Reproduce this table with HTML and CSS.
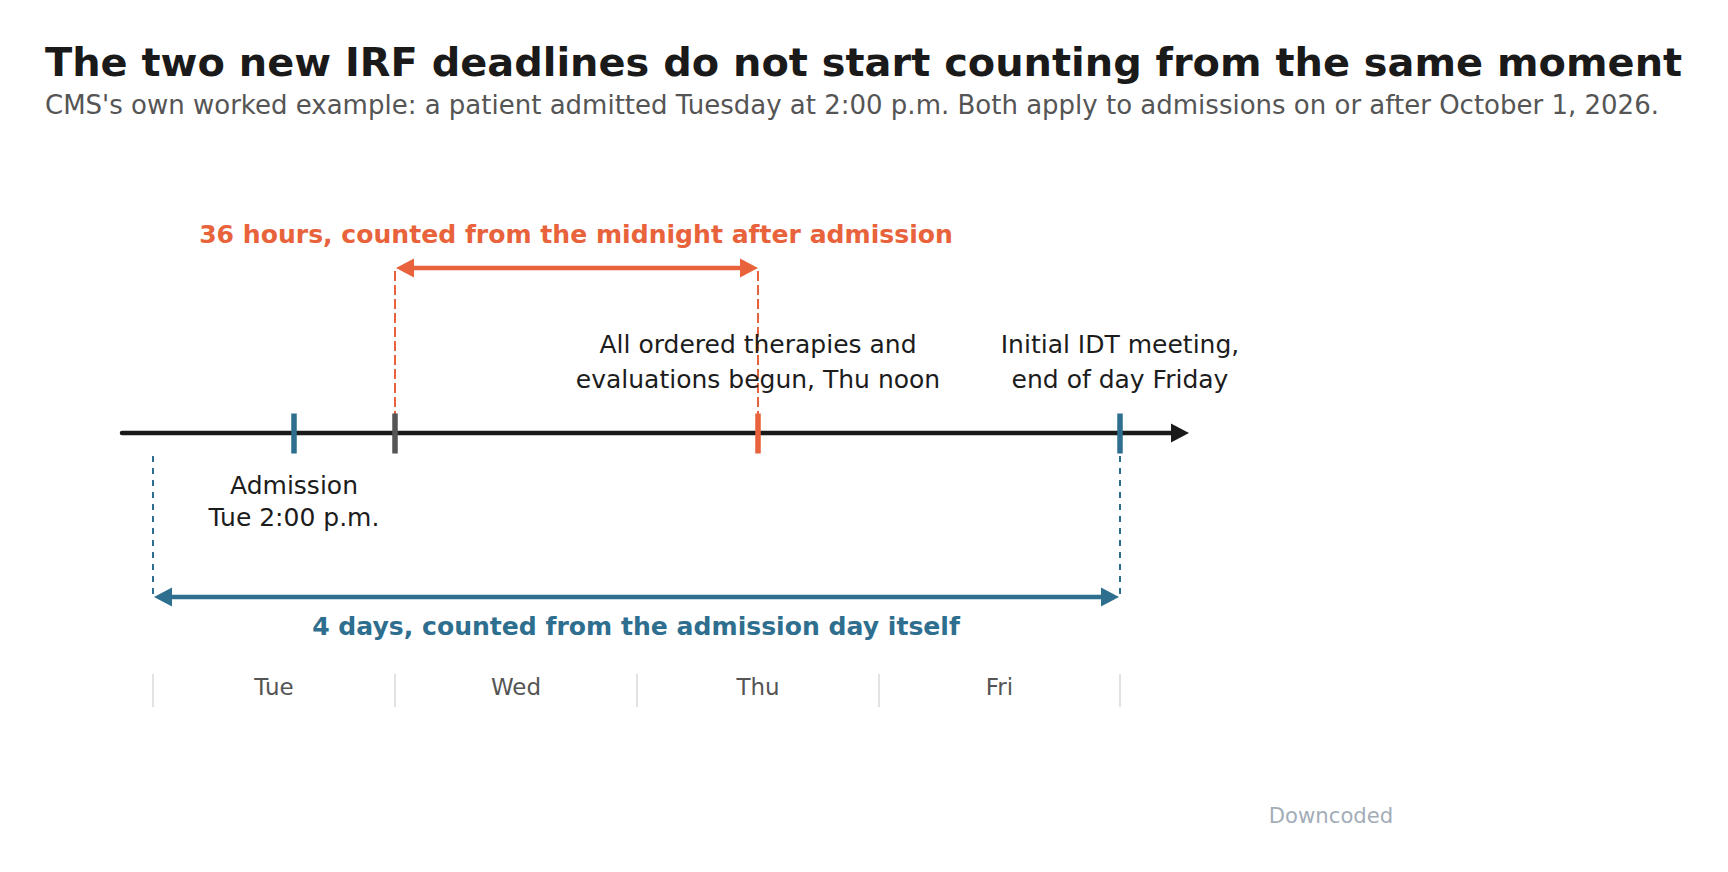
FILE: index.html
```html
<!DOCTYPE html>
<html lang="en">
<head>
<meta charset="utf-8">
<title>The two new IRF deadlines</title>
<link rel="stylesheet" href="styles.css">
</head>
<body>
<main class="page">
  <header class="header">
    <h1 class="title">The two new IRF deadlines do not start counting from the same moment</h1>
    <p class="subtitle">CMS's own worked example: a patient admitted Tuesday at 2:00 p.m. Both apply to admissions on or after October 1, 2026.</p>
  </header>

  <section class="chart">
    <svg class="chart-lines" width="1728" height="752" viewBox="0 0 1728 752" aria-hidden="true">
      <!-- orange: 36 hours span -->
      <line class="dash-orange" x1="395" y1="150" x2="395" y2="293"/>
      <line class="dash-orange" x1="758" y1="150" x2="758" y2="293"/>
      <line class="span-orange" x1="410" y1="147" x2="744" y2="147"/>
      <polygon class="fill-orange" points="396,147 414,137.5 414,156.5"/>
      <polygon class="fill-orange" points="758,147 740,137.5 740,156.5"/>

      <!-- blue: 4 days span -->
      <line class="dash-blue" x1="153" y1="335" x2="153" y2="477"/>
      <line class="dash-blue" x1="1120" y1="335" x2="1120" y2="477"/>
      <line class="span-blue" x1="168" y1="476" x2="1105" y2="476"/>
      <polygon class="fill-blue" points="154,476 172,466.5 172,485.5"/>
      <polygon class="fill-blue" points="1119,476 1101,466.5 1101,485.5"/>

      <!-- main time axis -->
      <line class="axis" x1="122" y1="312" x2="1176" y2="312"/>
      <polygon class="fill-axis" points="1189,312 1171,302.5 1171,321.5"/>

      <!-- event ticks -->
      <rect class="fill-blue" x="291.25" y="292.5" width="5.5" height="40"/>
      <rect class="fill-gray" x="392.25" y="292.5" width="5.5" height="40"/>
      <rect class="fill-orange" x="755.25" y="292.5" width="5.5" height="40"/>
      <rect class="fill-blue" x="1117.25" y="292.5" width="5.5" height="40"/>
    </svg>

    <div class="label label-bold label-orange lbl-36h">36 hours, counted from the midnight after admission</div>
    <div class="label label-event lbl-therapy">All ordered therapies and<br>evaluations begun, Thu noon</div>
    <div class="label label-event lbl-idt">Initial IDT meeting,<br>end of day Friday</div>
    <div class="label label-admit lbl-admit">Admission<br>Tue 2:00 p.m.</div>
    <div class="label label-bold label-blue lbl-4d">4 days, counted from the admission day itself</div>

    <div class="days">
      <div class="day">Tue</div>
      <div class="day">Wed</div>
      <div class="day">Thu</div>
      <div class="day day-last">Fri</div>
    </div>

    <div class="label watermark">Downcoded</div>
  </section>
</main>
</body>
</html>
```
FILE: styles.css
```css
html, body {
  margin: 0;
  padding: 0;
  background: #ffffff;
}

body {
  width: 1728px;
  height: 872px;
  overflow: hidden;
  font-family: "DejaVu Sans", "Noto Sans", sans-serif;
  color: #1c1c1c;
}

.page {
  display: flex;
  flex-direction: column;
}

.header {
  padding: 42px 0 0 45px;
}

.title {
  margin: 0;
  font-size: 39.9px;
  line-height: 40px;
  font-weight: bold;
  color: #1a1a1a;
  white-space: nowrap;
}

.subtitle {
  margin: 8px 0 0 0;
  font-size: 26px;
  line-height: 30px;
  color: #555555;
  white-space: nowrap;
}

.chart {
  position: relative;
  margin-top: 1px;
  width: 1728px;
  height: 751px;
}

.chart-lines {
  position: absolute;
  left: 0;
  top: 0;
}

.axis {
  stroke: #1a1a1a;
  stroke-width: 4.5;
  stroke-linecap: round;
}

.fill-axis { fill: #1a1a1a; }
.fill-orange { fill: #e8633b; }
.fill-blue { fill: #2e6e8e; }
.fill-gray { fill: #555555; }

.span-orange {
  stroke: #e8633b;
  stroke-width: 4.5;
}

.span-blue {
  stroke: #2e6e8e;
  stroke-width: 4.5;
}

.dash-orange {
  stroke: #e8633b;
  stroke-width: 2;
  stroke-dasharray: 10 4;
}

.dash-blue {
  stroke: #2e6e8e;
  stroke-width: 2;
  stroke-dasharray: 6 6;
}

/* labels placed on the timeline canvas, centred on their x position */
.label {
  position: absolute;
  transform: translateX(-50%);
  white-space: nowrap;
  text-align: center;
}

.label-bold {
  font-size: 25.1px;
  line-height: 30px;
  font-weight: bold;
}

.label-orange { color: #e8633b; }
.label-blue { color: #2e6e8e; }

.label-event {
  font-size: 25px;
  line-height: 35.5px;
  color: #1c1c1c;
}

.label-admit {
  font-size: 25px;
  line-height: 32.5px;
  color: #1c1c1c;
}

.lbl-36h { left: 576px; top: 99px; }
.lbl-therapy { left: 758px; top: 205.5px; }
.lbl-idt { left: 1120px; top: 205.5px; }
.lbl-admit { left: 294px; top: 348.5px; }
.lbl-4d { left: 636px; top: 491px; }

.days {
  position: absolute;
  left: 152px;
  top: 553px;
  display: flex;
}

.day {
  box-sizing: border-box;
  width: 242px;
  height: 33px;
  border-left: 2px solid #e2e2e2;
  font-size: 23px;
  line-height: 26px;
  color: #555555;
  text-align: center;
}

.day-last {
  width: 243px;
  border-right: 2px solid #e2e2e2;
}

.watermark {
  left: 1331px;
  top: 682px;
  font-size: 21.2px;
  line-height: 25px;
  color: #a3adb8;
}
```
